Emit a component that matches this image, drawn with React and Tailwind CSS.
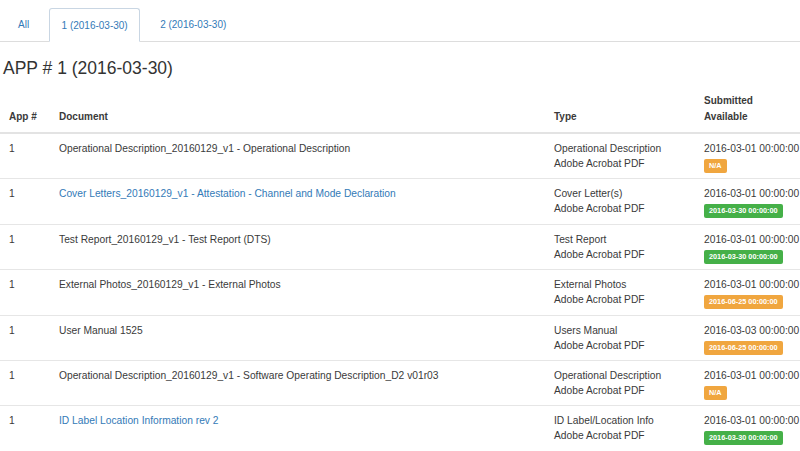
import React from 'react';

const ROWS = [
    { doc: 'Operational Description_20160129_v1 - Operational Description', link: false, type: 'Operational Description', submitted: '2016-03-01 00:00:00', badge: 'N/A', color: 'orange' },
    { doc: 'Cover Letters_20160129_v1 - Attestation - Channel and Mode Declaration', link: true, type: 'Cover Letter(s)', submitted: '2016-03-01 00:00:00', badge: '2016-03-30 00:00:00', color: 'green' },
    { doc: 'Test Report_20160129_v1 - Test Report (DTS)', link: false, type: 'Test Report', submitted: '2016-03-01 00:00:00', badge: '2016-03-30 00:00:00', color: 'green' },
    { doc: 'External Photos_20160129_v1 - External Photos', link: false, type: 'External Photos', submitted: '2016-03-01 00:00:00', badge: '2016-06-25 00:00:00', color: 'orange' },
    { doc: 'User Manual 1525', link: false, type: 'Users Manual', submitted: '2016-03-03 00:00:00', badge: '2016-06-25 00:00:00', color: 'orange' },
    { doc: 'Operational Description_20160129_v1 - Software Operating Description_D2 v01r03', link: false, type: 'Operational Description', submitted: '2016-03-01 00:00:00', badge: 'N/A', color: 'orange' },
    { doc: 'ID Label Location Information rev 2', link: true, type: 'ID Label/Location Info', submitted: '2016-03-01 00:00:00', badge: '2016-03-30 00:00:00', color: 'green' },
];

function Badge({ text, color }) {
    const bg = color === 'green' ? 'bg-[#45b048]' : 'bg-[#f0a63f]';
    return (
        <span className={`inline-block ${bg} text-white text-[7.3px] font-bold leading-[14px] px-[5px] rounded-[2px] whitespace-nowrap`}>
            {text}
        </span>
    );
}

export default function App() {
    return (
        <div className="w-[800px] h-[451px] overflow-hidden bg-white text-[#3a3a3a] font-['Liberation_Sans',Arial,sans-serif] text-[10.25px]">
            {/* Tabs */}
            <div className="flex items-end h-[42px] border-b border-[#dddddd] pl-[4px]">
                <div className="pl-[14px] pr-[20px] h-[33px] flex items-center text-[#337ab7] text-[10px]">All</div>
                <div className="w-[91px] h-[34px] flex items-center justify-center text-[#337ab7] text-[10px] border border-[#c9d6e3] border-b-white rounded-t-[3px] -mb-px bg-white">1 (2016-03-30)</div>
                <div className="px-[20px] h-[33px] flex items-center text-[#337ab7] text-[10px]">2 (2016-03-30)</div>
            </div>

            <h1 className="mt-[15px] pl-[3px] text-[17.5px] leading-[22px] text-[#333]">APP # 1 (2016-03-30)</h1>

            {/* Table */}
            <div className="mt-[14px] w-[840px]">
                <div className="grid grid-cols-[50px_495px_150px_1fr] items-end pb-[7px] border-b-2 border-[#e3e3e3] font-bold text-[10px] leading-[16px]">
                    <div className="pl-[9px]">App #</div>
                    <div className="pl-[9px]">Document</div>
                    <div className="pl-[9px]">Type</div>
                    <div className="pl-[9px]">Submitted<br />Available</div>
                </div>
                {ROWS.map((r, i) => (
                    <div key={i} className="grid grid-cols-[50px_495px_150px_1fr] h-[45.4px] pt-[7px] border-b border-[#e6e6e6] leading-[15px]">
                        <div className="pl-[9px]">1</div>
                        <div className={`pl-[9px] whitespace-nowrap ${r.link ? 'text-[#337ab7]' : ''}`}>{r.doc}</div>
                        <div className="pl-[9px]">
                            <div>{r.type}</div>
                            <div>Adobe Acrobat PDF</div>
                        </div>
                        <div className="pl-[9px] whitespace-nowrap">
                            <div>{r.submitted}</div>
                            <div className="mt-[1px]"><Badge text={r.badge} color={r.color} /></div>
                        </div>
                    </div>
                ))}
            </div>
        </div>
    );
}
